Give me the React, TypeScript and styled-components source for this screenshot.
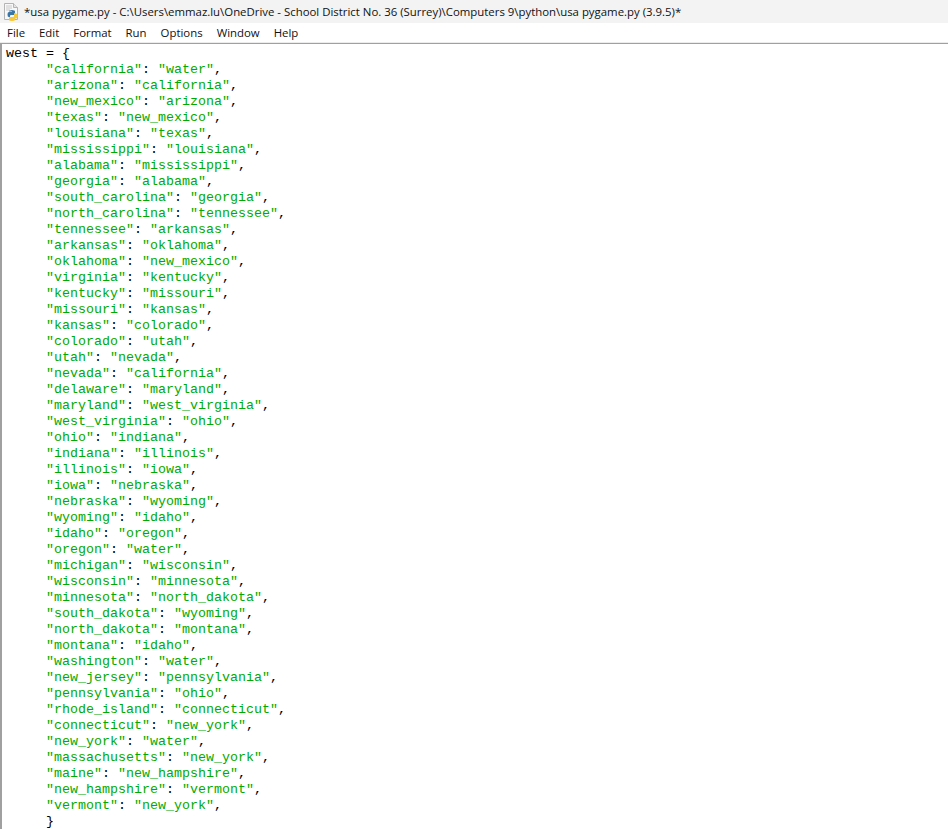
import React from "react";
import styled, { createGlobalStyle } from "styled-components";

const GlobalStyle = createGlobalStyle`
  html, body {
    margin: 0;
    padding: 0;
    background: #fff;
    overflow: hidden;
  }
`;

const pairs: [string, string][] = [
  ["california", "water"],
  ["arizona", "california"],
  ["new_mexico", "arizona"],
  ["texas", "new_mexico"],
  ["louisiana", "texas"],
  ["mississippi", "louisiana"],
  ["alabama", "mississippi"],
  ["georgia", "alabama"],
  ["south_carolina", "georgia"],
  ["north_carolina", "tennessee"],
  ["tennessee", "arkansas"],
  ["arkansas", "oklahoma"],
  ["oklahoma", "new_mexico"],
  ["virginia", "kentucky"],
  ["kentucky", "missouri"],
  ["missouri", "kansas"],
  ["kansas", "colorado"],
  ["colorado", "utah"],
  ["utah", "nevada"],
  ["nevada", "california"],
  ["delaware", "maryland"],
  ["maryland", "west_virginia"],
  ["west_virginia", "ohio"],
  ["ohio", "indiana"],
  ["indiana", "illinois"],
  ["illinois", "iowa"],
  ["iowa", "nebraska"],
  ["nebraska", "wyoming"],
  ["wyoming", "idaho"],
  ["idaho", "oregon"],
  ["oregon", "water"],
  ["michigan", "wisconsin"],
  ["wisconsin", "minnesota"],
  ["minnesota", "north_dakota"],
  ["south_dakota", "wyoming"],
  ["north_dakota", "montana"],
  ["montana", "idaho"],
  ["washington", "water"],
  ["new_jersey", "pennsylvania"],
  ["pennsylvania", "ohio"],
  ["rhode_island", "connecticut"],
  ["connecticut", "new_york"],
  ["new_york", "water"],
  ["massachusetts", "new_york"],
  ["maine", "new_hampshire"],
  ["new_hampshire", "vermont"],
  ["vermont", "new_york"],
];

const menus = ["File", "Edit", "Format", "Run", "Options", "Window", "Help"];

const Page = styled.div`
  width: 948px;
  height: 829px;
  display: flex;
  flex-direction: column;
  overflow: hidden;
  background: #fff;
  font-family: "Open Sans", "Liberation Sans", sans-serif;
  color: #111;
`;

const TitleBar = styled.div`
  height: 23px;
  flex: none;
  display: flex;
  align-items: center;
  gap: 4px;
  padding-left: 3px;
  background: #f3f3f3;
  font-size: 11.4px;
  white-space: nowrap;
`;

const MenuBar = styled.div`
  height: 19px;
  flex: none;
  display: flex;
  align-items: center;
  gap: 14px;
  padding-left: 7px;
  background: #fff;
  border-bottom: 1px solid #ececec;
  font-size: 11.4px;
`;

const Editor = styled.div`
  flex: 1;
  min-height: 0;
  border-top: 1px solid #a0a0a0;
  border-left: 2px solid #a0a0a0;
  padding: 2px 0 0 4px;
  font-family: "Liberation Mono", monospace;
  font-size: 13.33px;
  line-height: 16px;
  white-space: pre;
  overflow: hidden;
`;

const Line = styled.div`
  height: 16px;
  color: #000;
`;

const Str = styled.span`
  color: #00aa00;
`;

const FileIcon = () => (
  <svg width="17" height="18" viewBox="0 0 17 18">
    <path d="M1.5 .5h9l4 4v12h-13z" fill="#f8f8f8" stroke="#b4b4b4" />
    <path d="M10.5 .5v4h4" fill="#e4e4e4" stroke="#b4b4b4" />
    <path d="M3 3h6M3 5h6M3 7h4" stroke="#c8c8c8" />
    <path d="M6 8.500q0-1.500 3-1.500t3 1.500v2.500q0 1-1 1h-3q-1 0-1 1v1h-1.200q-1.300 0-1.300-2.500t1.300-2.500h3.200v-.5h-3z" fill="#3a75a8" />
    <path d="M13 10.500q1.500 0 1.500 2.500t-1.500 2.500h-1v1.500q0 1-3 1t-3-1v-2q0-1 1-1h3q1 0 1-1v-3z" fill="#f5c93c" />
  </svg>
);

const App = () => (
  <Page>
    <GlobalStyle />
    <TitleBar>
      <FileIcon />
      <span>*usa pygame.py - C:\Users\emmaz.lu\OneDrive - School District No. 36 (Surrey)\Computers 9\python\usa pygame.py (3.9.5)*</span>
    </TitleBar>
    <MenuBar>
      {menus.map((m) => (
        <span key={m}>{m}</span>
      ))}
    </MenuBar>
    <Editor>
      <Line>{"west = {"}</Line>
      {pairs.map(([k, v], i) => (
        <Line key={i}>
          {"     "}
          <Str>"{k}"</Str>: <Str>"{v}"</Str>,
        </Line>
      ))}
      <Line>{"     }"}</Line>
    </Editor>
  </Page>
);

export default App;
